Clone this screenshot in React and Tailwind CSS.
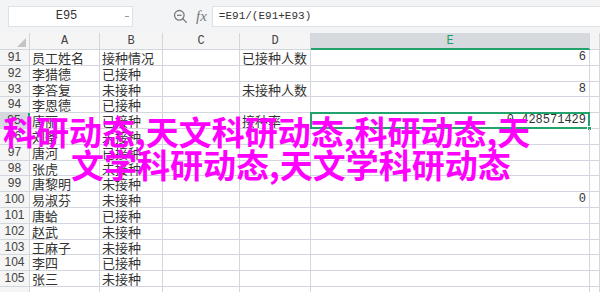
import React from "react";

const rows = [
  ["91", "员工姓名", "接种情况", "", "已接种人数", "6"],
  ["92", "李猎德", "已接种", "", "", ""],
  ["93", "李答复", "未接种", "", "未接种人数", "8"],
  ["94", "李恩德", "已接种", "", "", ""],
  ["95", "唐丽", "已接种", "", "接种率", "0.428571429"],
  ["96", "刘备", "未接种", "", "", ""],
  ["97", "唐河", "已接种", "", "", ""],
  ["98", "张虎", "未接种", "", "", ""],
  ["99", "唐黎明", "未接种", "", "", ""],
  ["100", "易淑芬", "未接种", "", "", "0"],
  ["101", "唐蛤", "已接种", "", "", ""],
  ["102", "赵武", "未接种", "", "", ""],
  ["103", "王麻子", "未接种", "", "", ""],
  ["104", "李四", "已接种", "", "", ""],
  ["105", "张三", "未接种", "", "", ""],
  ["", "", "", "", "", ""],
];

const line = "border-r border-b border-[#d3d6de]";

function ZoomIcon() {
  return (
    <svg width="15" height="15" viewBox="0 0 15 15" fill="none" stroke="#7a7a7a" strokeWidth="1.3">
      <circle cx="6.3" cy="6.3" r="4.8" />
      <path d="M4 6.3h4.6" />
      <path d="M9.8 9.8l3.6 3.6" strokeLinecap="round" />
    </svg>
  );
}

export default function App() {
  return (
    <div className="relative w-[600px] h-[292px] overflow-hidden bg-white text-[#333] font-['Noto_Sans_CJK_SC',sans-serif]">
      {/* toolbar */}
      <div className="h-[33px] bg-[#f3f4f6] flex items-center pl-[8px]">
        <div className="w-[125px] h-[21px] bg-white border border-[#dfe1e5] flex items-center relative">
          <span className="flex-1 text-center text-[12px] leading-[21px] font-['Liberation_Mono',monospace] text-[#333] pr-[8px]">E95</span>
          <span className="absolute right-[3px] top-[9px] w-[4px] h-[1px] bg-[#999]"></span>
        </div>
        <div className="ml-[40px] flex items-center">
          <ZoomIcon />
        </div>
        <span className="ml-[8px] text-[15px] italic font-['Liberation_Serif',serif] text-[#777] leading-none">fx</span>
        <div className="ml-[5px] flex-1 h-[21px] bg-white border border-[#dfe1e5] border-r-0 flex items-center pl-[6px]">
          <span className="text-[11px] font-['Liberation_Mono',monospace] text-[#333]">=E91/(E91+E93)</span>
        </div>
      </div>

      {/* grid */}
      <div className="grid grid-cols-[30px_70px_63px_77px_71px_279px_10px] grid-rows-[17px]">
        {/* header */}
        <div className={`${line} bg-[#f5f5f5] relative`}>
          <svg className="absolute right-[3px] bottom-[2px]" width="9" height="9" viewBox="0 0 9 9">
            <path d="M9 0V9H0Z" fill="#c4c4c4" />
          </svg>
        </div>
        {["A", "B", "C", "D"].map((c) => (
          <div key={c} className={`${line} bg-[#f5f5f5] text-center text-[12px] leading-[16px] font-['Liberation_Mono',monospace] text-[#444]`}>
            {c}
          </div>
        ))}
        <div className="border-r border-[#d3d6de] border-b-2 border-b-[#22a36b] bg-[#d6d9de] text-center text-[12px] leading-[16px] font-['Liberation_Mono',monospace] text-[#1f9e68]">
          E
        </div>
        <div className={`${line} bg-[#f5f5f5]`}></div>

        {rows.map((r, i) => {
          const sel = r[0] === "95";
          return (
            <React.Fragment key={i}>
              <div
                className={`h-[15.8px] border-b border-[#d3d6de] text-center text-[12px] leading-[15px] font-['Liberation_Sans',sans-serif] text-[#444] ${
                  sel ? "bg-[#d6d9de] border-r-2 border-r-[#22a36b]" : "bg-[#f5f5f5] border-r"
                }`}
              >
                {r[0]}
              </div>
              <div className={`${line} h-[15.8px] pl-[2px] text-[13px] leading-[15px] whitespace-nowrap`}>{r[1]}</div>
              <div className={`${line} h-[15.8px] pl-[2px] text-[13px] leading-[15px] whitespace-nowrap`}>{r[2]}</div>
              <div className={`${line} h-[15.8px]`}>{r[3]}</div>
              <div className={`${line} h-[15.8px] pl-[2px] text-[13px] leading-[15px] whitespace-nowrap`}>{r[4]}</div>
              <div className={`${line} h-[15.8px] relative pr-[3px] text-right text-[12px] leading-[15px] font-['Liberation_Mono',monospace] text-[#333]`}>
                {r[5]}
                {sel && (
                  <>
                    <span className="absolute -left-[1px] -top-[1px] -right-[1px] -bottom-[1px] border-2 border-[#22a36b]"></span>
                    <span className="absolute -right-[3px] -bottom-[3px] w-[5px] h-[5px] bg-[#22a36b] border border-white"></span>
                  </>
                )}
              </div>
              <div className={`${line} h-[15.8px]`}></div>
            </React.Fragment>
          );
        })}
      </div>

      {/* watermark text */}
      <div className="absolute left-[3px] top-[115px] text-[33px] leading-[33px] font-bold text-[#f0f] whitespace-nowrap">
        科研动态,天文科研动态,科研动态,天
      </div>
      <div className="absolute left-[71px] top-[148px] text-[33px] leading-[33px] font-bold text-[#f0f] whitespace-nowrap">
        文学科研动态,天文学科研动态
      </div>
    </div>
  );
}
